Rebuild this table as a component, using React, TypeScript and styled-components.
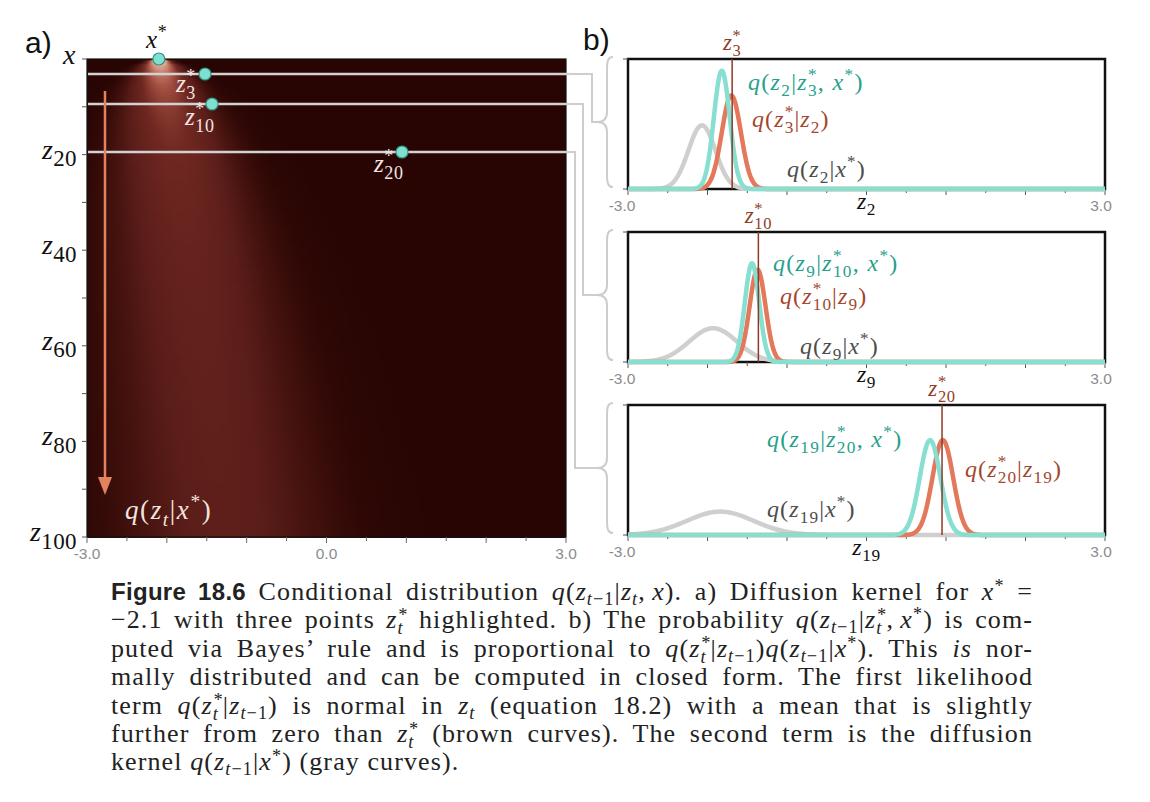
import React from "react";
import styled, { createGlobalStyle } from "styled-components";

const GlobalStyle = createGlobalStyle`
  body {
    margin: 0;
    background: #ffffff;
  }
`;

const Page = styled.div`
  width: 1150px;
  height: 802px;
  padding-top: 14px;
  box-sizing: border-box;
  font-family: "Liberation Serif", serif;
  color: #1f1f1f;
  overflow: hidden;
`;

const FigureRow = styled.div`
  display: flex;
  align-items: flex-start;
`;

const KernelSvg = styled.svg`
  display: block;
  flex: none;
  overflow: visible;
`;

const ConnectorSvg = styled.svg`
  display: block;
  flex: none;
  overflow: visible;
`;

const PanelColumn = styled.div`
  display: flex;
  flex-direction: column;
`;

const PanelSvg = styled.svg`
  display: block;
  overflow: visible;
`;

const PanelTag = styled.text`
  font-family: "Liberation Sans", sans-serif;
  font-size: 30px;
  fill: #111;
`;

const TickLabel = styled.text`
  font-family: "Liberation Sans", sans-serif;
  font-size: 15.5px;
  fill: #8c8c8c;
`;

const MathLabel = styled.text<{ $color: string; $size: number; $spacing: number }>`
  font-family: "Liberation Serif", serif;
  font-size: ${(p) => p.$size}px;
  letter-spacing: ${(p) => p.$spacing}px;
  fill: ${(p) => p.$color};
  white-space: pre;
`;

const Caption = styled.div`
  margin: 4px 0 0 111px;
  width: 922px;
  font-size: 26px;
  line-height: 28.4px;
  letter-spacing: 1.1px;
  color: #222;
`;

const CaptionLine = styled.div<{ $last?: boolean }>`
  text-align: justify;
  text-align-last: ${(p) => (p.$last ? "left" : "justify")};
`;

const FigNo = styled.span`
  font-family: "Liberation Sans", sans-serif;
  font-weight: bold;
  font-size: 24px;
  letter-spacing: 0.3px;
`;

const M = styled.span`
  white-space: nowrap;
`;

const V = styled.i``;

const Sub = styled.sub`
  font-size: 0.7em;
  vertical-align: -0.28em;
  line-height: 0;
`;

const Sup = styled.sup`
  font-size: 0.7em;
  vertical-align: 0.42em;
  line-height: 0;
`;

const Stack = styled.span`
  display: inline-flex;
  flex-direction: column;
  vertical-align: middle;
  margin: -8px 0;
  font-size: 0.7em;
  line-height: 0.74;
  font-style: italic;
`;

/* ---------- math in svg ---------- */

type Part = { s: string; k: "i" | "r" | "sub" | "sup"; back?: boolean };

function parseMath(src: string): Part[] {
  const out: Part[] = [];
  let i = 0;
  while (i < src.length) {
    const c = src[i];
    if (c === "_" || c === "^") {
      i++;
      let body: string;
      if (src[i] === "{") {
        const j = src.indexOf("}", i);
        body = src.slice(i + 1, j);
        i = j + 1;
      } else {
        body = src[i];
        i++;
      }
      const part: Part = { s: body, k: c === "_" ? "sub" : "sup" };
      const prev = out[out.length - 1];
      if (prev && prev.k === "sub" && part.k === "sup") {
        // star first, then the subscript pulled back under it
        out[out.length - 1] = part;
        out.push({ ...prev, back: true });
      } else if (prev && prev.k === "sup" && part.k === "sub") {
        out.push({ ...part, back: true });
      } else {
        out.push(part);
      }
    } else {
      out.push({ s: c, k: /[a-z]/.test(c) ? "i" : "r" });
      i++;
    }
  }
  return out;
}

const MathText = ({
  x,
  y,
  src,
  size,
  color,
  anchor,
  sub = 0.72,
  spacing = 0.6,
}: {
  x: number;
  y: number;
  src: string;
  size: number;
  color: string;
  anchor?: "start" | "middle" | "end";
  sub?: number;
  spacing?: number;
}) => {
  const small = size * sub;
  const parts = parseMath(src);
  let cur = 0;
  return (
    <MathLabel x={x} y={y} $color={color} $size={size} $spacing={spacing} textAnchor={anchor}>
      {parts.map((p, i) => {
        const target = p.k === "sub" ? size * 0.27 : p.k === "sup" ? -size * 0.4 : 0;
        const dy = target - cur;
        cur = target;
        if (p.k === "sub" || p.k === "sup") {
          return (
            <tspan key={i} dy={dy || undefined} dx={p.back ? -(small * 0.5 + spacing) : undefined} fontSize={small}>
              {[...p.s].map((c, j) => (
                <tspan key={j} fontStyle={/[a-z]/.test(c) ? "italic" : "normal"}>
                  {c}
                </tspan>
              ))}
            </tspan>
          );
        }
        return (
          <tspan key={i} dy={dy || undefined} fontStyle={p.k === "i" ? "italic" : "normal"}>
            {p.s}
          </tspan>
        );
      })}
    </MathLabel>
  );
};

/* ---------- heat map of the diffusion kernel ---------- */

const HM = { x0: 87, x1: 566, y0: 45, y1: 523 };
const X_STAR = -2.1;

const CMAP: [number, number[]][] = [
  [0, [40, 5, 3]],
  [0.06, [64, 16, 12]],
  [0.15, [90, 29, 25]],
  [0.3, [112, 40, 33]],
  [0.45, [158, 76, 62]],
  [0.65, [214, 148, 128]],
  [0.85, [245, 214, 204]],
  [1, [255, 244, 238]],
];

function cmap(v: number) {
  const t = Math.min(1, Math.max(0, v));
  for (let i = 1; i < CMAP.length; i++) {
    const [b, cb] = CMAP[i];
    const [a, ca] = CMAP[i - 1];
    if (t <= b) {
      const f = (t - a) / (b - a);
      const c = ca.map((q, k) => Math.round(q + (cb[k] - q) * f));
      return `rgb(${c[0]},${c[1]},${c[2]})`;
    }
  }
  return "rgb(255,244,238)";
}

const heatRows = (() => {
  const bounds: number[] = [];
  for (let t = 0; t < 6; t += 0.25) bounds.push(t);
  for (let t = 6; t < 20; t += 0.5) bounds.push(t);
  for (let t = 20; t <= 100; t += 1) bounds.push(t);
  const scale = (HM.y1 - HM.y0) / 100;
  return bounds.slice(0, -1).map((ta, i) => {
    const tb = bounds[i + 1];
    const tc = Math.max((ta + tb) / 2, 0.15);
    const a = Math.pow(0.99, tc);
    const mu = Math.sqrt(a) * X_STAR;
    const sd = Math.sqrt(1 - a);
    const xs = new Set<number>();
    for (let k = 0; k <= 96; k++) xs.add(-3 + (k * 6) / 96);
    for (const m of [-2, -1.4, -1, -0.5, 0, 0.5, 1, 1.4, 2]) {
      const v = mu + m * sd;
      if (v > -3 && v < 3) xs.add(v);
    }
    const stops = [...xs]
      .sort((p, q) => p - q)
      .map((v) => {
        const d = Math.exp(-0.5 * ((v - mu) / sd) ** 2) / (sd * Math.sqrt(2 * Math.PI));
        return { o: (v + 3) / 6, c: cmap(1 - Math.exp(-d / 2.6)) };
      });
    return { y: HM.y0 + ta * scale, h: (tb - ta) * scale, stops };
  });
})();

const hx = (v: number) => HM.x0 + ((v + 3) / 6) * (HM.x1 - HM.x0);
const ht = (t: number) => HM.y0 + (t / 100) * (HM.y1 - HM.y0);

const SLICES = [
  { y: 60, x: 205, label: "z_3^*", lx: 176, ly: 78 },
  { y: 90, x: 212, label: "z_{10}^*", lx: 185, ly: 111 },
  { y: 138, x: 402, label: "z_{20}^*", lx: 374, ly: 158 },
];

const TICKS = Array.from({ length: 13 }, (_, i) => -3 + i * 0.5);

const KernelPlot = () => (
  <KernelSvg width={570} height={560}>
    <defs>
      {heatRows.map((r, i) => (
        <linearGradient key={i} id={`row${i}`} gradientUnits="userSpaceOnUse" x1={HM.x0} x2={HM.x1} y1={0} y2={0}>
          {r.stops.map((s, j) => (
            <stop key={j} offset={s.o} stopColor={s.c} />
          ))}
        </linearGradient>
      ))}
    </defs>
    <PanelTag x={25} y={39}>
      a)
    </PanelTag>
    <g shapeRendering="crispEdges">
      {heatRows.map((r, i) => (
        <rect key={i} x={HM.x0} y={r.y} width={HM.x1 - HM.x0} height={r.h + 1} fill={`url(#row${i})`} />
      ))}
    </g>
    <rect x={HM.x0} y={HM.y0} width={HM.x1 - HM.x0} height={HM.y1 - HM.y0} fill="none" stroke="#111" strokeWidth={1.2} />

    {Array.from({ length: 11 }, (_, i) => (
      <line key={i} x1={82} x2={HM.x0} y1={ht(i * 10)} y2={ht(i * 10)} stroke="#555" strokeWidth={1} />
    ))}
    {TICKS.map((v, i) => (
      <line key={i} x1={hx(v)} x2={hx(v)} y1={HM.y1} y2={HM.y1 + (i % 2 === 0 ? 6 : 4)} stroke="#666" strokeWidth={1} />
    ))}
    <TickLabel x={HM.x0} y={545} textAnchor="middle">
      -3.0
    </TickLabel>
    <TickLabel x={hx(0)} y={545} textAnchor="middle">
      0.0
    </TickLabel>
    <TickLabel x={HM.x1} y={545} textAnchor="middle">
      3.0
    </TickLabel>

    <MathText x={76} y={50} src="x" size={28} color="#111" anchor="end" />
    {[20, 40, 60, 80, 100].map((t) => (
      <MathText key={t} x={77} y={ht(t) + 4} src={`z_{${t}}`} size={28} sub={0.82} spacing={0.4} color="#111" anchor="end" />
    ))}

    {SLICES.map((s) => (
      <line key={s.y} x1={HM.x0 + 1} x2={570} y1={s.y} y2={s.y} stroke="#d2d2d2" strokeWidth={2.5} />
    ))}

    <line x1={105} x2={105} y1={77} y2={466} stroke="#e2835f" strokeWidth={2.5} />
    <polygon points="98,463 112,463 105,481" fill="#e2835f" />
    <MathText x={125} y={505} src="q(z_t|x^*)" size={27} spacing={1.6} color="#f2e4df" />

    <circle cx={hx(X_STAR)} cy={HM.y0} r={6} fill="#7fe0cf" stroke="#2f9584" strokeWidth={1.2} />
    <MathText x={146} y={34} src="x^*" size={25} color="#111" />
    {SLICES.map((s) => (
      <g key={s.label}>
        <circle cx={s.x} cy={s.y} r={6} fill="#7fe0cf" stroke="#2f9584" strokeWidth={1.2} />
        <MathText x={s.lx} y={s.ly} src={s.label} size={25} color="#f3e6e2" />
      </g>
    ))}
  </KernelSvg>
);

/* ---------- brackets from the heat map to panel b ---------- */

const Connectors = () => (
  <ConnectorSvg width={27} height={560}>
    <g fill="none" stroke="#cdcdcd" strokeWidth={2}>
      <path d="M0,60 H22 V108 H27" />
      <path d="M0,90 H13 V281 H27" />
      <path d="M0,138 H5 V454 H27" />
    </g>
  </ConnectorSvg>
);

/* ---------- conditional distributions ---------- */

type Curve = { mu: number; sd: number; h: number };
type Label = { x: number; y: number; src: string };

type PanelSpec = {
  star: number;
  starLabel: string;
  axis: string;
  teal: Curve;
  orange: Curve;
  gray: Curve;
  tealLabel: Label;
  brownLabel: Label;
  grayLabel: Label;
};

const BOX = { x: 31, y: 45, w: 477, h: 130 };
const px = (v: number) => BOX.x + ((v + 3) / 6) * BOX.w;

const PANELS: PanelSpec[] = [
  {
    star: -1.69,
    starLabel: "z_3^*",
    axis: "z_2",
    teal: { mu: -1.82, sd: 0.1, h: 0.91 },
    orange: { mu: -1.7, sd: 0.12, h: 0.72 },
    gray: { mu: -2.07, sd: 0.17, h: 0.49 },
    tealLabel: { x: 151, y: 76, src: "q(z_2|z_3^*, x^*)" },
    brownLabel: { x: 155, y: 113, src: "q(z_3^*|z_2)" },
    grayLabel: { x: 190, y: 163, src: "q(z_2|x^*)" },
  },
  {
    star: -1.36,
    starLabel: "z_{10}^*",
    axis: "z_9",
    teal: { mu: -1.44, sd: 0.09, h: 0.76 },
    orange: { mu: -1.37, sd: 0.1, h: 0.71 },
    gray: { mu: -1.93, sd: 0.3, h: 0.26 },
    tealLabel: { x: 176, y: 84, src: "q(z_9|z_{10}^*, x^*)" },
    brownLabel: { x: 183, y: 117, src: "q(z_{10}^*|z_9)" },
    grayLabel: { x: 203, y: 167, src: "q(z_9|x^*)" },
  },
  {
    star: 0.95,
    starLabel: "z_{20}^*",
    axis: "z_{19}",
    teal: { mu: 0.8, sd: 0.13, h: 0.73 },
    orange: { mu: 0.96, sd: 0.13, h: 0.73 },
    gray: { mu: -1.84, sd: 0.42, h: 0.18 },
    tealLabel: { x: 170, y: 87, src: "q(z_{19}|z_{20}^*, x^*)" },
    brownLabel: { x: 368, y: 117, src: "q(z_{20}^*|z_{19})" },
    grayLabel: { x: 170, y: 157, src: "q(z_{19}|x^*)" },
  },
];

function curvePath(c: Curve) {
  const pts: string[] = [];
  for (let k = 0; k <= 480; k++) {
    const v = -3 + (k * 6) / 480;
    const y = BOX.y + BOX.h - c.h * BOX.h * Math.exp(-0.5 * ((v - c.mu) / c.sd) ** 2);
    pts.push(`${px(v).toFixed(2)},${y.toFixed(2)}`);
  }
  return `M${pts.join(" L")}`;
}

const TEAL = "#86dfd0";
const ORANGE = "#e3785a";
const GRAY = "#cfcfcf";

const DistPanel = ({ spec, first }: { spec: PanelSpec; first?: boolean }) => {
  const top = BOX.y - 2;
  const bot = BOX.y + BOX.h - 2;
  const mid = (top + bot) / 2;
  const bottom = BOX.y + BOX.h;
  return (
    <PanelSvg width={533} height={173}>
      {first && (
        <PanelTag x={-14} y={36}>
          b)
        </PanelTag>
      )}
      <path
        d={`M16,${top} C11,${top} 10,${top + 4} 10,${top + 12} L10,${mid - 10} C10,${mid - 4} 7,${mid} 0,${mid} C7,${mid} 10,${mid + 4} 10,${mid + 10} L10,${bot - 12} C10,${bot - 4} 11,${bot} 16,${bot}`}
        fill="none"
        stroke="#cdcdcd"
        strokeWidth={2}
      />
      <rect x={BOX.x} y={BOX.y} width={BOX.w} height={BOX.h} fill="#fff" stroke="#111" strokeWidth={2.5} />
      <line x1={BOX.x - 5} x2={BOX.x} y1={BOX.y} y2={BOX.y} stroke="#555" />
      <line x1={BOX.x - 5} x2={BOX.x} y1={bottom} y2={bottom} stroke="#555" />
      {TICKS.map((v, i) => (
        <line key={i} x1={px(v)} x2={px(v)} y1={bottom} y2={bottom + (i % 2 === 0 ? 6 : 4)} stroke="#555" strokeWidth={1} />
      ))}
      <g fill="none" strokeWidth={4.5} strokeLinejoin="round">
        <path d={curvePath(spec.gray)} stroke={GRAY} />
        <path d={curvePath(spec.orange)} stroke={ORANGE} />
        <path d={curvePath(spec.teal)} stroke={TEAL} />
      </g>
      <line x1={px(spec.star)} x2={px(spec.star)} y1={BOX.y} y2={bottom} stroke="#8b3a26" strokeWidth={1.5} />
      <MathText x={px(spec.star)} y={36} src={spec.starLabel} size={23} color="#8f3e29" anchor="middle" />
      <MathText {...spec.tealLabel} size={24} spacing={1.3} color="#27a08b" />
      <MathText {...spec.brownLabel} size={24} spacing={1.1} color="#a3472e" />
      <MathText {...spec.grayLabel} size={24} spacing={1.1} color="#4d4d4d" />
      <TickLabel x={BOX.x - 6} y={bottom + 22} textAnchor="middle">
        -3.0
      </TickLabel>
      <TickLabel x={BOX.x + BOX.w - 4} y={bottom + 22} textAnchor="middle">
        3.0
      </TickLabel>
      <MathText x={BOX.x + BOX.w / 2} y={bottom + 20} src={spec.axis} size={24} color="#111" anchor="middle" />
    </PanelSvg>
  );
};

/* ---------- caption helpers ---------- */

const Zm = () => (
  <>
    <V>z</V>
    <Sub>
      <V>t</V>−1
    </Sub>
  </>
);

const ZStar = () => (
  <>
    <V>z</V>
    <Stack>
      <span>*</span>
      <span>t</span>
    </Stack>
  </>
);

const XStar = () => (
  <>
    <V>x</V>
    <Sup>*</Sup>
  </>
);

const THIN = "\u2009";

export default function App() {
  return (
    <Page>
      <GlobalStyle />
      <FigureRow>
        <KernelPlot />
        <Connectors />
        <PanelColumn>
          {PANELS.map((p, i) => (
            <DistPanel key={p.axis} spec={p} first={i === 0} />
          ))}
        </PanelColumn>
      </FigureRow>
      <Caption>
        <CaptionLine>
          <FigNo>Figure 18.6</FigNo> Conditional distribution{" "}
          <M>
            <V>q</V>(<Zm />|<V>z</V>
            <Sub>
              <V>t</V>
            </Sub>
            ,{THIN}
            <V>x</V>)
          </M>
          . a) Diffusion kernel for{" "}
          <M>
            <XStar />
          </M>{" "}
          =
        </CaptionLine>
        <CaptionLine>
          −2.1 with three points{" "}
          <M>
            <ZStar />
          </M>{" "}
          highlighted. b) The probability{" "}
          <M>
            <V>q</V>(<Zm />|<ZStar />,{THIN}
            <XStar />)
          </M>{" "}
          is com-
        </CaptionLine>
        <CaptionLine>
          puted via Bayes’ rule and is proportional to{" "}
          <M>
            <V>q</V>(<ZStar />|<Zm />)<V>q</V>(<Zm />|<XStar />)
          </M>
          . This <V>is</V> nor-
        </CaptionLine>
        <CaptionLine>mally distributed and can be computed in closed form. The first likelihood</CaptionLine>
        <CaptionLine>
          term{" "}
          <M>
            <V>q</V>(<ZStar />|<Zm />)
          </M>{" "}
          is normal in{" "}
          <M>
            <V>z</V>
            <Sub>
              <V>t</V>
            </Sub>
          </M>{" "}
          (equation 18.2) with a mean that is slightly
        </CaptionLine>
        <CaptionLine>
          further from zero than{" "}
          <M>
            <ZStar />
          </M>{" "}
          (brown curves). The second term is the diffusion
        </CaptionLine>
        <CaptionLine $last>
          kernel{" "}
          <M>
            <V>q</V>(<Zm />|<XStar />)
          </M>{" "}
          (gray curves).
        </CaptionLine>
      </Caption>
    </Page>
  );
}
